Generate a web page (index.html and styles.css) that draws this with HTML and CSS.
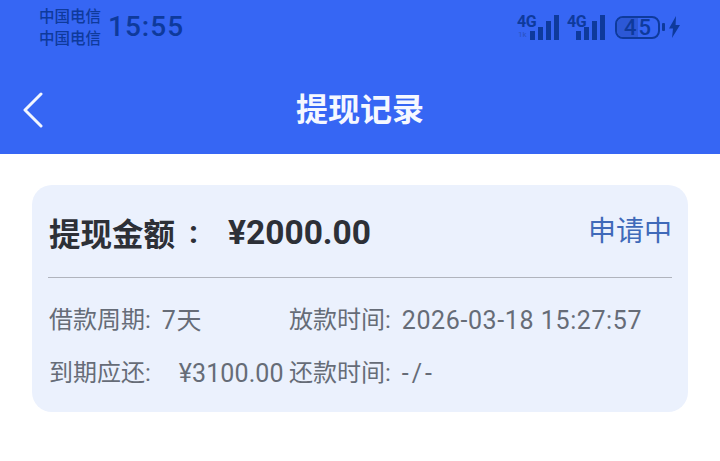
FILE: index.html
```html
<!DOCTYPE html>
<html lang="zh-CN">
<head>
<meta charset="utf-8">
<title>提现记录</title>
<link rel="stylesheet" href="styles.css">
</head>
<body>
<header class="header">
  <div class="status">
    <div class="carriers"><span>中国电信</span><span>中国电信</span></div>
    <div class="time">15:55</div>
    <div class="indicators">
      <div class="signal signal-wide">
        <span class="net">4G</span>
        <span class="speed">1k</span>
        <svg class="bars" width="29" height="25" viewBox="0 0 29 25"><path d="M0 16h5v9H0zM8 12h5v13H8zM16 6h5v19h-5zM24 0h5v25h-5z"/></svg>
      </div>
      <div class="signal">
        <span class="net">4G</span>
        <svg class="bars" width="29" height="25" viewBox="0 0 29 25"><path d="M0 16h5v9H0zM8 12h5v13H8zM16 6h5v19h-5zM24 0h5v25h-5z"/></svg>
      </div>
      <div class="battery-wrap">
        <div class="battery"><span class="level"></span><span class="pct">45</span></div>
        <span class="cap"></span>
        <svg class="bolt" width="13" height="24" viewBox="0 0 13 22"><path d="M8 0 1 12.500h4L4 22l8-13H7.600z"/></svg>
      </div>
    </div>
  </div>
  <nav class="nav">
    <svg class="back" width="22" height="36" viewBox="0 0 22 36"><path d="M19 2 3 18l16 16"/></svg>
    <h1 class="title">提现记录</h1>
  </nav>
</header>
<main class="content">
  <section class="card">
    <div class="card-head">
      <div class="amount"><span class="amount-label">提现金额</span><span class="amount-colon">:</span><span class="amount-value">¥2000.00</span></div>
      <div class="state">申请中</div>
    </div>
    <div class="details">
      <div class="item"><span>借款周期:</span><span class="val val-near">7天</span></div>
      <div class="item"><span>放款时间:</span><span class="val val-near">2026-03-18 15:27:57</span></div>
      <div class="item"><span>到期应还:</span><span class="val val-far">¥3100.00</span></div>
      <div class="item"><span>还款时间:</span><span class="val val-near val-empty">-/-</span></div>
    </div>
  </section>
</main>
</body>
</html>
```
FILE: styles.css
```css
* { box-sizing: border-box; margin: 0; padding: 0; }
html, body { width: 720px; height: 461px; overflow: hidden; background: #fff; }
body { font-family: Roboto, "Noto Sans CJK SC", sans-serif; }

.header { height: 154px; background: #3666f4; display: flex; flex-direction: column; }

.status { height: 54px; display: flex; align-items: flex-start; padding: 6px 39px 0 39px; color: #0e3a9c; }
.carriers { display: flex; flex-direction: column; font-size: 15.5px; line-height: 22px; font-weight: 500; width: 69px; }
.time { font-size: 28px; line-height: 30px; letter-spacing: 1px; margin-top: 6px; font-weight: 500; }
.indicators { margin-left: auto; display: flex; align-items: flex-start; gap: 8px; height: 40px; padding-top: 9px; }
.signal { position: relative; width: 38px; height: 25px; display: flex; justify-content: flex-end; align-items: flex-end; }
.signal-wide { width: 42px; }
.net { position: absolute; left: 0; top: -1px; font-size: 16px; line-height: 16px; font-weight: 700; letter-spacing: -0.5px; }
.speed { position: absolute; left: 1px; bottom: 1px; font-size: 8px; line-height: 9px; color: #2a52c0; }
.bars { fill: #0e3a9c; }
.battery-wrap { display: flex; align-items: center; margin-left: 2px; height: 24px; }
.battery { position: relative; width: 45px; height: 23px; border: 2px solid #0e3a9c; border-radius: 8px; display: flex; align-items: center; justify-content: center; }
.level { position: absolute; left: 0; top: 0; bottom: 0; width: 50%; background: #2c58d6; border-radius: 6px 0 0 6px; }
.pct { position: relative; font-size: 22px; line-height: 19px; letter-spacing: 2px; font-weight: 500; margin-right: -2px; }
.cap { width: 3px; height: 8px; margin-left: 2px; background: #0e3a9c; border-radius: 1px; }
.bolt { fill: #0e3a9c; margin-left: 3px; }

.nav { position: relative; flex: 1; display: flex; align-items: center; justify-content: center; }
.back { position: absolute; left: 22px; top: 38px; fill: none; stroke: #f2f6ff; stroke-width: 3; stroke-linecap: round; stroke-linejoin: round; }
.title { color: #f5f8ff; font-size: 32px; line-height: 40px; font-weight: 700; margin-top: 11px; }

.content { padding: 31px 32px 0; }
.card { height: 227px; background: #ebf1fd; border-radius: 20px; padding: 0 16px; }
.card-head { height: 93px; border-bottom: 1px solid #b0b4bd; display: flex; justify-content: space-between; align-items: center; }
.amount { display: flex; align-items: center; color: #2d3037; font-weight: 700; margin: 2px 0 0 1px; }
.amount-label { font-size: 31.5px; }
.amount-colon { font-size: 32px; margin-left: 14px; width: 39px; }
.amount-value { font-size: 33.5px; }
.state { color: #3f69b9; font-size: 28px; margin-top: -4px; }

.details { display: grid; grid-template-columns: 240px 1fr; grid-auto-rows: 53px; padding: 16px 0 0 1px; color: #666c77; font-size: 24px; line-height: 53px; }
.item { display: flex; white-space: nowrap; }
.val { font-size: 25px; }
.val-near { margin-left: 11px; letter-spacing: 0.6px; }
.val-far { margin-left: 28px; letter-spacing: 0.1px; }
.val-empty { letter-spacing: 3px; }
```
